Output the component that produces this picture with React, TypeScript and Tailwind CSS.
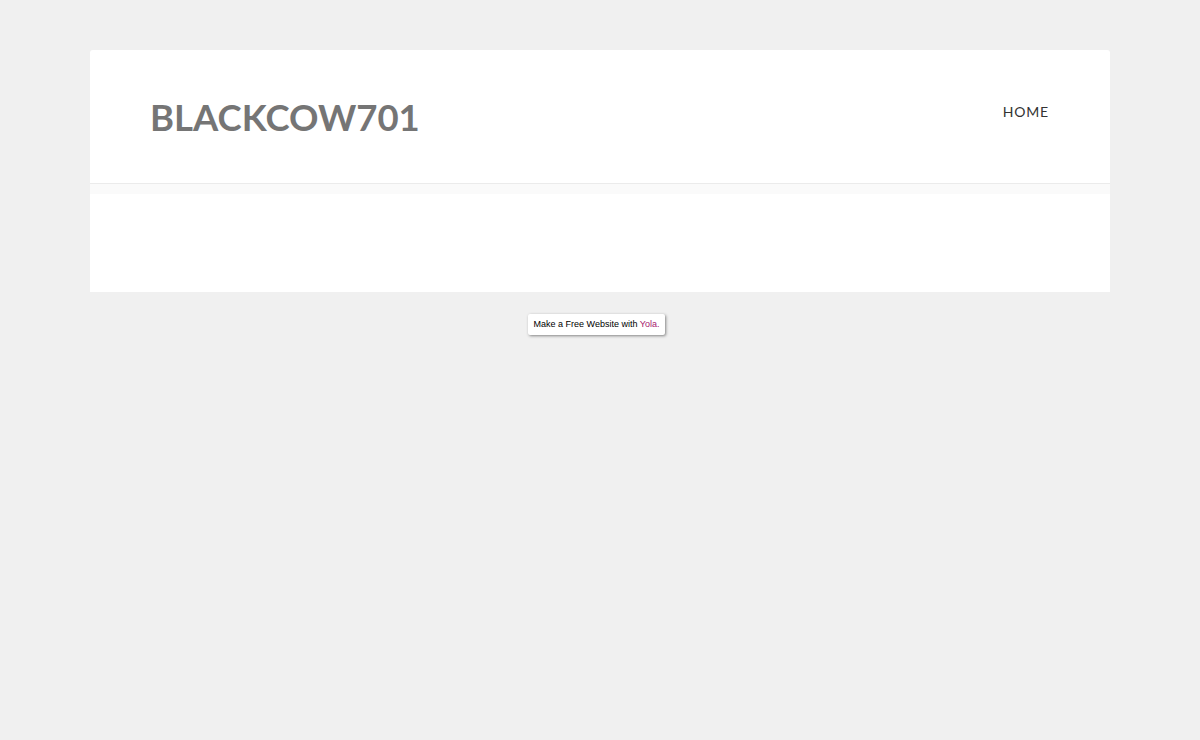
export default function App() {
  return (
    <div className="min-h-[740px] w-full bg-[#f0f0f0] pt-[50px]" style={{ fontFamily: "Lato, 'Liberation Sans', sans-serif" }}>
      <div className="mx-[90px] rounded-t-[3px] bg-white">
        <header className="flex h-[134px] items-start justify-between border-b border-[#ebebeb] pl-[60px] pr-[61px]">
          <h1 className="mt-[44px] text-[36.5px] font-bold leading-[46px] text-[#757575]">BLACKCOW701</h1>
          <nav className="mt-[52px] text-[14px] leading-[20px] tracking-[0.06em] text-[#333]">HOME</nav>
        </header>
        <div className="h-[10px] bg-[#fafafa]" />
        <div className="h-[98px] bg-white" />
      </div>
      <div className="mt-[22px] flex justify-center">
        <div className="ml-[-7px] rounded-[2px] bg-white px-[6px] py-[3px] text-[9px] leading-[15px] text-black shadow-[1px_1px_3px_rgba(0,0,0,0.45)]" style={{ fontFamily: "'Liberation Sans', Arial, sans-serif" }}>
          Make a Free Website with <span className="text-[#a6206e]">Yola.</span>
        </div>
      </div>
    </div>
  );
}
